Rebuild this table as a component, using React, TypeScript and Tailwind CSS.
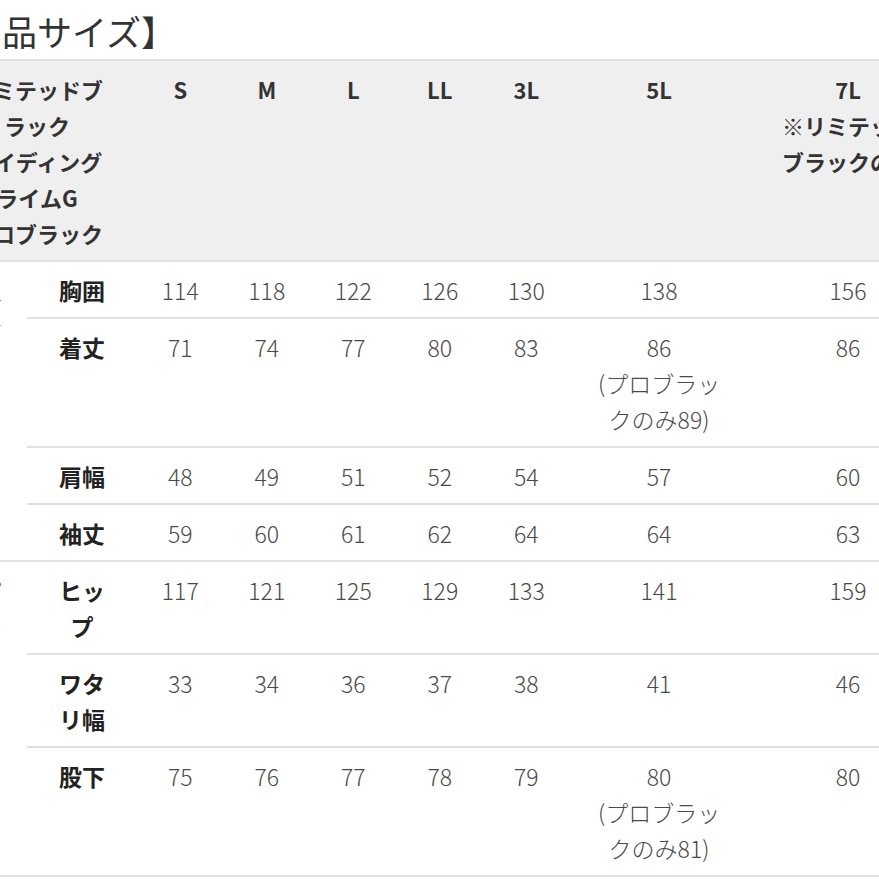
import React from "react";

const SIZES = ["S", "M", "L", "LL", "3L", "5L", "7L"];

type Row = { label: React.ReactNode; values: React.ReactNode[] };

const note = (v: string, n: string) => (
  <>
    {v}
    <br />
    (プロブラッ
    <br />
    クのみ{n})
  </>
);

const top: Row[] = [
  { label: "胸囲", values: ["114", "118", "122", "126", "130", "138", "156"] },
  { label: "着丈", values: ["71", "74", "77", "80", "83", note("86", "89"), "86"] },
  { label: "肩幅", values: ["48", "49", "51", "52", "54", "57", "60"] },
  { label: "袖丈", values: ["59", "60", "61", "62", "64", "64", "63"] },
];

const bottom: Row[] = [
  {
    label: (
      <>
        ヒッ
        <br />
        プ
      </>
    ),
    values: ["117", "121", "125", "129", "133", "141", "159"],
  },
  {
    label: (
      <>
        ワタ
        <br />
        リ幅
      </>
    ),
    values: ["33", "34", "36", "37", "38", "41", "46"],
  },
  { label: "股下", values: ["75", "76", "77", "78", "79", note("80", "81"), "80"] },
];

const cellBase = "align-top text-center pt-[10px] pb-[9px] px-0 border-t-2 border-[#e0e0e0]";

function Group({ name, rows, last }: { name: string; rows: Row[]; last?: boolean }) {
  return (
    <>
      {rows.map((r, i) => {
        const lastRow = last && i === rows.length - 1;
        return (
          <tr key={i}>
            {i === 0 && (
              <td
                rowSpan={rows.length}
                className={`align-top text-right pt-[10px] pb-[9px] pl-[22px] pr-[25px] border-t-2 border-[#e0e0e0] text-[#555] text-[23px] font-light ${last ? "border-b-2" : ""}`}
              >
                {name}
              </td>
            )}
            <td className={`${cellBase} text-[23px] font-bold text-[#222] ${lastRow ? "border-b-2" : ""}`}>
              {r.label}
            </td>
            {r.values.map((v, j) => (
              <td
                key={j}
                className={`${cellBase} text-[23px] font-light text-[#4a4a4a] ${lastRow ? "border-b-2" : ""}`}
              >
                {v}
              </td>
            ))}
          </tr>
        );
      })}
    </>
  );
}

export default function App() {
  return (
    <div
      className="w-[879px] h-[879px] overflow-hidden bg-white"
      style={{ fontFamily: '"Noto Sans CJK JP", "Noto Sans", sans-serif' }}
    >
      <div className="ml-[-68px] w-[1100px]">
        <div className="pt-[5px] text-[35px] leading-[52px] text-[#333] whitespace-nowrap">【商品サイズ】</div>
        <table className="ml-[5px] mt-[2px] table-fixed border-collapse w-[1010px] text-[22px] leading-[36px]">
          <colgroup>
            <col className="w-[90px]" />
            <col className="w-[110px]" />
            <col className="w-[86.5px]" />
            <col className="w-[86.5px]" />
            <col className="w-[86.5px]" />
            <col className="w-[86.5px]" />
            <col className="w-[86.5px]" />
            <col className="w-[179px]" />
            <col className="w-[199px]" />
          </colgroup>
          <thead>
            <tr className="bg-[#efefef]">
              <th colSpan={2} className={`${cellBase} font-bold text-[#333] whitespace-nowrap`}>
                リミテッドブ
                <br />
                ラック
                <br />
                ライディング
                <br />
                ライムG
                <br />
                プロブラック
              </th>
              {SIZES.map((s) => (
                <th key={s} className={`${cellBase} font-semibold text-[#333] whitespace-nowrap`}>
                  {s === "7L" ? (
                    <>
                      7L
                      <br />
                      ※リミテッド
                      <br />
                      ブラックのみ
                    </>
                  ) : (
                    s
                  )}
                </th>
              ))}
            </tr>
          </thead>
          <tbody>
            <Group name="上着" rows={top} />
            <Group name="パンツ" rows={bottom} last />
          </tbody>
        </table>
      </div>
    </div>
  );
}
